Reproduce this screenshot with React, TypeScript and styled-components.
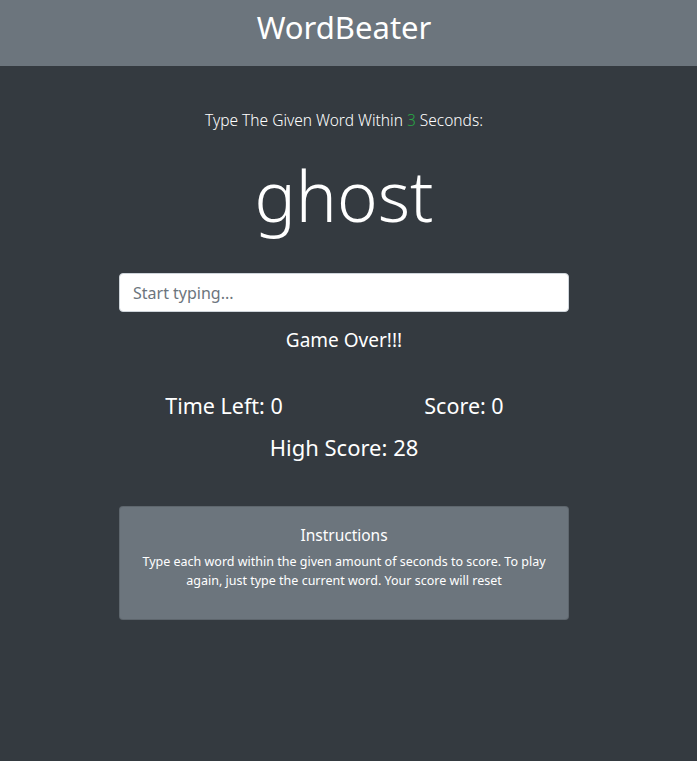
import React from "react";
import styled, { createGlobalStyle } from "styled-components";

const GlobalStyle = createGlobalStyle`
  html, body {
    margin: 0;
    padding: 0;
    background: #343a40;
    color: #fff;
    font-family: "Noto Sans", "Open Sans", "Liberation Sans", sans-serif;
  }
  * { box-sizing: border-box; }
`;

const Header = styled.header`
  height: 66px;
  background: #6c757d;
  display: flex;
  align-items: center;
  justify-content: center;
  padding: 0 9px 12px 0;
`;

const Title = styled.h1`
  margin: 0;
  font-size: 31px;
  font-weight: 400;
  line-height: 40px;
  color: #fff;
`;

const Page = styled.div`
  padding-right: 9px;
`;

const Main = styled.main`
  width: 450px;
  margin: 0 auto;
  padding-top: 43px;
  display: flex;
  flex-direction: column;
  text-align: center;
`;

const Lead = styled.p`
  margin: 0;
  font-size: 15.5px;
  line-height: 22px;
  font-weight: 300;
`;

const Seconds = styled.span`
  color: #28a745;
`;

const Word = styled.h2`
  margin: 22px 0 36px;
  font-size: 69px;
  font-weight: 300;
  line-height: 84px;
`;

const Input = styled.input`
  height: 39px;
  width: 100%;
  padding: 6px 13px;
  font-family: inherit;
  font-size: 16px;
  color: #495057;
  background: #fff;
  border: 1px solid #ced4da;
  border-radius: 4px;
  &::placeholder {
    color: #6c757d;
  }
`;

const Status = styled.h4`
  margin: 16px 0 0;
  font-size: 19px;
  line-height: 24px;
  font-weight: 400;
`;

const Stats = styled.div`
  display: grid;
  grid-template-columns: 1fr 1fr;
  margin: 41px -15px 0;
`;

const Stat = styled.h3<{ $size?: number }>`
  margin: 0;
  font-size: ${(p) => p.$size ?? 21.5}px;
  line-height: 26px;
  font-weight: 400;
`;

const High = styled(Stat)`
  margin-top: 15px;
`;

const Card = styled.section`
  margin-top: 46px;
  background: #6c757d;
  border: 1px solid rgba(0, 0, 0, 0.125);
  border-radius: 4px;
  padding: 17px 20px 29px;
`;

const CardTitle = styled.h5`
  margin: 0 0 6px;
  font-size: 15.5px;
  line-height: 22px;
  font-weight: 400;
`;

const CardText = styled.p`
  margin: 0;
  font-size: 12.5px;
  line-height: 19px;
`;

export default function App() {
  return (
    <>
      <GlobalStyle />
      <Header>
        <Title>WordBeater</Title>
      </Header>
      <Page>
        <Main>
          <Lead>
            Type The Given Word Within <Seconds>3</Seconds> Seconds:
          </Lead>
          <Word>ghost</Word>
          <Input placeholder="Start typing..." />
          <Status>Game Over!!!</Status>
          <Stats>
            <Stat>Time Left: 0</Stat>
            <Stat>Score: 0</Stat>
          </Stats>
          <High $size={22}>High Score: 28</High>
          <Card>
            <CardTitle>Instructions</CardTitle>
            <CardText>
              Type each word within the given amount of seconds to score. To
              play again, just type the current word. Your score will reset
            </CardText>
          </Card>
        </Main>
      </Page>
    </>
  );
}
